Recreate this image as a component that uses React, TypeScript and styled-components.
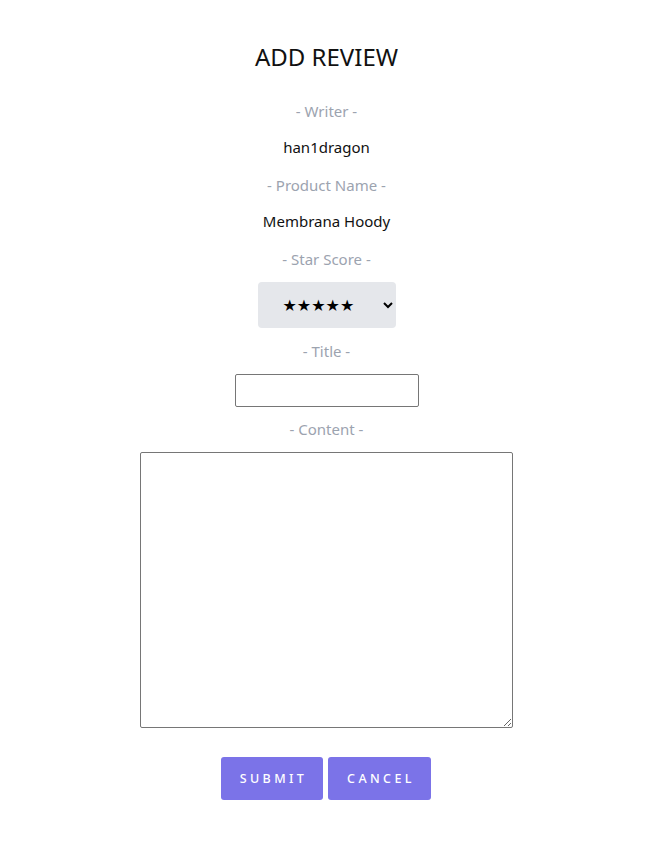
import styled, { createGlobalStyle } from 'styled-components';

const GlobalStyle = createGlobalStyle`
	body {
		margin: 0;
		background: #fff;
		font-family: 'Noto Sans', 'Open Sans', sans-serif;
	}
`;

const Container = styled.form`
	display: flex;
	flex-direction: column;
	align-items: center;
	padding: 41px 2px 45px 0;
`;

const Title = styled.h1`
	margin: 0 0 26px;
	font-size: 24px;
	line-height: 32px;
	font-weight: 400;
	color: #111;
`;

const Label = styled.p`
	margin: 0 0 11px;
	font-size: 15px;
	line-height: 24px;
	color: #9ca3af;
`;

const Value = styled.p`
	margin: 0 0 13px;
	font-size: 15px;
	line-height: 26px;
	color: #111;
`;

const Select = styled.select`
	width: 138px;
	height: 46px;
	margin-bottom: 11px;
	padding: 0 10px 0 21px;
	border: none;
	border-radius: 4px;
	background-color: #e5e7eb;
	font-size: 16px;
	color: #000;
	font-family: 'DejaVu Sans', sans-serif;
`;

const Input = styled.input`
	box-sizing: border-box;
	width: 184px;
	height: 33px;
	margin: 0 0 10px;
	border: 1px solid #767676;
	border-radius: 2px;
`;

const TextArea = styled.textarea`
	box-sizing: border-box;
	width: 373px;
	height: 276px;
	margin: 0 0 29px;
	border: 1px solid #767676;
	border-radius: 2px;
`;

const Buttons = styled.div`
	display: flex;
	gap: 5px;
	margin-left: -1px;
`;

const Button = styled.button<{ w: number }>`
	width: ${(props) => props.w}px;
	height: 43px;
	border: none;
	border-radius: 3px;
	background-color: #7b73e8;
	color: #fff;
	font-family: 'Noto Sans', sans-serif;
	font-size: 12.5px;
	font-weight: 500;
	letter-spacing: 3.4px;
	padding: 0 0 0 3px;
	cursor: pointer;
`;

function App() {
	return (
		<>
			<GlobalStyle />
			<Container onSubmit={(e) => e.preventDefault()}>
				<Title>ADD REVIEW</Title>
				<Label>- Writer -</Label>
				<Value>han1dragon</Value>
				<Label>- Product Name -</Label>
				<Value>Membrana Hoody</Value>
				<Label>- Star Score -</Label>
				<Select defaultValue="5">
					<option value="5">★★★★★</option>
					<option value="4">★★★★</option>
					<option value="3">★★★</option>
					<option value="2">★★</option>
					<option value="1">★</option>
				</Select>
				<Label>- Title -</Label>
				<Input type="text" />
				<Label>- Content -</Label>
				<TextArea />
				<Buttons>
					<Button w={102} type="submit">SUBMIT</Button>
					<Button w={103} type="button">CANCEL</Button>
				</Buttons>
			</Container>
		</>
	);
}

export default App;
